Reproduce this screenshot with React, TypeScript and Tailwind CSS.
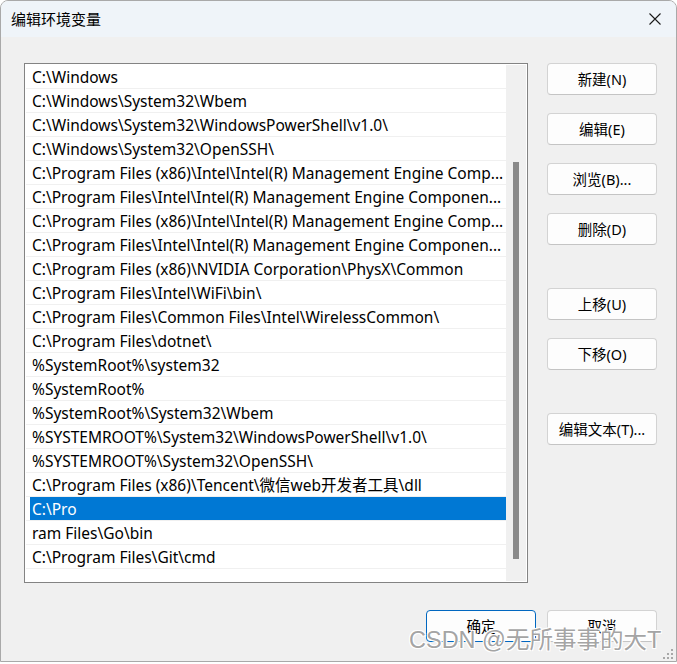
import React from "react";

const rows = [
  "C:\\Windows",
  "C:\\Windows\\System32\\Wbem",
  "C:\\Windows\\System32\\WindowsPowerShell\\v1.0\\",
  "C:\\Windows\\System32\\OpenSSH\\",
  "C:\\Program Files (x86)\\Intel\\Intel(R) Management Engine Comp...",
  "C:\\Program Files\\Intel\\Intel(R) Management Engine Componen...",
  "C:\\Program Files (x86)\\Intel\\Intel(R) Management Engine Comp...",
  "C:\\Program Files\\Intel\\Intel(R) Management Engine Componen...",
  "C:\\Program Files (x86)\\NVIDIA Corporation\\PhysX\\Common",
  "C:\\Program Files\\Intel\\WiFi\\bin\\",
  "C:\\Program Files\\Common Files\\Intel\\WirelessCommon\\",
  "C:\\Program Files\\dotnet\\",
  "%SystemRoot%\\system32",
  "%SystemRoot%",
  "%SystemRoot%\\System32\\Wbem",
  "%SYSTEMROOT%\\System32\\WindowsPowerShell\\v1.0\\",
  "%SYSTEMROOT%\\System32\\OpenSSH\\",
  "C:\\Program Files (x86)\\Tencent\\微信web开发者工具\\dll",
  "C:\\Pro",
  "ram Files\\Go\\bin",
  "C:\\Program Files\\Git\\cmd",
];

const font = { fontFamily: '"Noto Sans", "Noto Sans CJK SC", sans-serif' };

function Btn({ label, primary }: { label: string; primary?: boolean }) {
  return (
    <div
      className={
        "w-[110px] h-[32px] flex items-center justify-center pt-[1px] rounded-[4px] bg-[#fdfdfd] text-[14.5px] text-black " +
        (primary ? "border border-[#0067c0]" : "border border-[#d3d3d3] border-b-[#c4c4c4]")
      }
    >
      {label}
    </div>
  );
}

export default function App() {
  return (
    <div className="w-[677px] h-[664px] bg-white relative overflow-hidden" style={font}>
      <div className="w-[677px] h-[662px] border border-[#a9a9a9] rounded-t-[8px] bg-[#f0f0f0] flex flex-col overflow-hidden">
        {/* Title bar */}
        <div className="h-[36px] bg-[#eff4f9] flex items-center justify-between pl-[10px] pr-[14px] pb-[2px] shrink-0">
          <span className="text-[15px] text-black leading-none" style={{ fontFamily: '"Noto Sans CJK SC", sans-serif' }}>
            编辑环境变量
          </span>
          <svg width="14" height="14" viewBox="0 0 14 14" className="mt-[1px]">
            <path d="M1.5 1.5 L12.5 12.5 M12.5 1.5 L1.5 12.5" stroke="#1a1a1a" strokeWidth="1.1" />
          </svg>
        </div>

        {/* Body */}
        <div className="flex flex-col pl-[23px] pt-[26px]">
          <div className="flex">
            {/* List */}
            <div className="w-[504px] h-[520px] border border-[#838383] bg-white p-[1px] flex">
              <div className="w-[480px] flex flex-col">
                {rows.map((r, i) => (
                  <div key={i} className="h-[24px] border-b border-[#f0f0f0] flex shrink-0 pl-[4px]">
                    <div
                      className={
                        "flex-1 flex items-center pl-[2px] pt-[3px] text-[15.5px] whitespace-nowrap overflow-hidden " +
                        (i === 18 ? "bg-[#0078d4] text-white" : "text-black")
                      }
                    >
                      {r}
                    </div>
                  </div>
                ))}
              </div>
              <div className="w-[20px] h-full bg-[#f0f0f0] flex justify-center pt-[97px]">
                <div className="w-[6px] h-[397px] bg-[#8a8a8a]" />
              </div>
            </div>

            {/* Side buttons */}
            <div className="ml-[19px] flex flex-col">
              <Btn label="新建(N)" />
              <div className="mt-[18px]"><Btn label="编辑(E)" /></div>
              <div className="mt-[18px]"><Btn label="浏览(B)..." /></div>
              <div className="mt-[18px]"><Btn label="删除(D)" /></div>
              <div className="mt-[43px]"><Btn label="上移(U)" /></div>
              <div className="mt-[18px]"><Btn label="下移(O)" /></div>
              <div className="mt-[43px]"><Btn label="编辑文本(T)..." /></div>
            </div>
          </div>

          {/* Bottom buttons */}
          <div className="flex justify-end gap-[11px] pr-[19px] mt-[27px]">
            <Btn label="确定" primary />
            <Btn label="取消" />
          </div>
        </div>
      </div>

      {/* Resize grip */}
      <svg className="absolute left-[662px] top-[648px]" width="12" height="12" viewBox="0 0 12 12">
        <rect x="9" y="1" width="2" height="2" fill="#a8a8a8" />
        <rect x="5" y="5" width="2" height="2" fill="#a8a8a8" />
        <rect x="9" y="5" width="2" height="2" fill="#a8a8a8" />
        <rect x="1" y="9" width="2" height="2" fill="#a8a8a8" />
        <rect x="5" y="9" width="2" height="2" fill="#a8a8a8" />
        <rect x="9" y="9" width="2" height="2" fill="#a8a8a8" />
      </svg>

      {/* Watermark */}
      <div
        className="absolute left-[409px] top-[627px] text-[23.5px] leading-[26px] text-[rgba(140,140,140,0.8)] whitespace-nowrap"
        style={{
          fontFamily: '"Liberation Sans", "Noto Sans CJK SC", sans-serif',
          textShadow: "1px 1px 0 #fff, -1px -1px 0 #fff, 1px -1px 0 #fff, -1px 1px 0 #fff",
        }}
      >
        CSDN @无所事事的大T
      </div>
    </div>
  );
}
